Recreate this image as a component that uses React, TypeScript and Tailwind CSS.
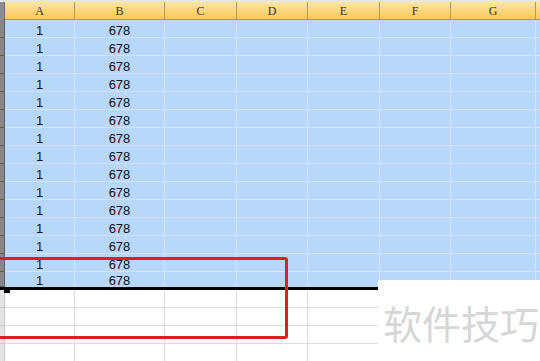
const cols = [
  { name: 'A', w: 70 },
  { name: 'B', w: 90 },
  { name: 'C', w: 72 },
  { name: 'D', w: 71 },
  { name: 'E', w: 72 },
  { name: 'F', w: 71 },
  { name: 'G', w: 85 },
  { name: '', w: 60 },
];

const dataRows = Array.from({ length: 15 }, () => ['1', '678']);
const emptyRows = 4;

function HeaderRow() {
  return (
    <div className="flex h-[20px] border-t-2 border-[#e6e6e6]">
      <div className="w-[5px] shrink-0 bg-[#8e8e8e] border-r border-[#6f6f6f]" />
      {cols.map((c, i) => (
        <div
          key={i}
          style={{ width: c.w }}
          className="shrink-0 flex items-center justify-center pt-[1px] border-r border-b border-[#b59d4f] bg-gradient-to-b from-[#fde6a2] to-[#f8c94f] text-[12px] leading-none text-[#333] [font-family:'Liberation_Serif',serif]"
        >
          {c.name}
        </div>
      ))}
    </div>
  );
}

function DataRow({ a, b, last }: { a: string; b: string; last: boolean }) {
  return (
    <div className={`flex h-[18px] ${last ? 'border-b-[3px] border-black' : ''}`}>
      <div className="w-[5px] shrink-0 bg-[#878787] border-r border-b border-[#5f5f5f]" />
      {cols.map((c, i) => (
        <div
          key={i}
          style={{ width: c.w }}
          className={`shrink-0 flex justify-center bg-[#b7d7fb] border-r border-[#d3e5fa] text-[13px] leading-none text-[#111] ${
            last ? 'items-end' : 'items-center pt-[3px] border-b'
          }`}
        >
          {i === 0 ? a : i === 1 ? b : ''}
        </div>
      ))}
    </div>
  );
}

function EmptyRow() {
  return (
    <div className="flex h-[18px]">
      <div className="w-[5px] shrink-0 bg-[#e4e4e4] border-r border-b border-[#c8c8c8]" />
      {cols.map((c, i) => (
        <div
          key={i}
          style={{ width: c.w }}
          className="shrink-0 bg-white border-r border-b border-[#dcdcdc]"
        />
      ))}
    </div>
  );
}

export default function App() {
  return (
    <div className="relative w-[540px] h-[361px] overflow-hidden bg-white [font-family:'Liberation_Sans',Arial,sans-serif]">
      <HeaderRow />
      {dataRows.map((r, i) => (
        <DataRow key={i} a={r[0]} b={r[1]} last={i === dataRows.length - 1} />
      ))}
      {Array.from({ length: emptyRows }).map((_, i) => (
        <EmptyRow key={i} />
      ))}

      {/* fill handle */}
      <div className="absolute left-[4px] top-[287px] w-[6px] h-[6px] bg-black" />

      {/* watermark box */}
      <div className="absolute left-[378px] top-[280px] w-[162px] h-[81px] bg-white flex items-center justify-center pt-[4px] pl-[4px]">
        <span className="text-[39px] leading-none tracking-[0px] text-[#d6d6d6] [font-family:'Noto_Sans_CJK_SC',sans-serif]">
          软件技巧
        </span>
      </div>

      {/* red annotation box */}
      <div className="absolute left-[-6px] top-[257px] w-[294px] h-[82px] border-[3px] border-[#dd1f1f] rounded-[3px]" />
    </div>
  );
}
